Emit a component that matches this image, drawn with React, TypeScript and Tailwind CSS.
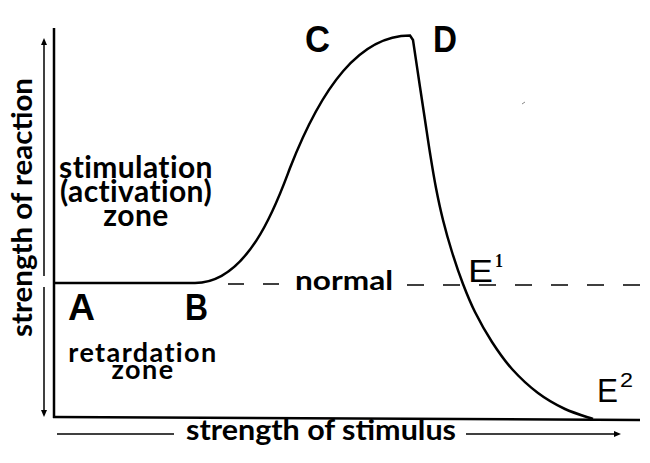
const fall: [number, number][] = [
  [413, 40], [420, 87], [425, 120], [430, 153], [436, 188], [443, 220],
  [452, 252], [463, 284], [475, 312], [492, 342], [512, 369], [538, 393],
  [565, 409], [593, 419],
];

// catmull-rom -> cubic bezier segments
const smooth = (pts: [number, number][]) => {
  let d = "";
  for (let i = 0; i < pts.length - 1; i++) {
    const p0 = pts[i - 1] || pts[i];
    const p1 = pts[i];
    const p2 = pts[i + 1];
    const p3 = pts[i + 2] || p2;
    const c1x = p1[0] + (p2[0] - p0[0]) / 6;
    const c1y = p1[1] + (p2[1] - p0[1]) / 6;
    const c2x = p2[0] - (p3[0] - p1[0]) / 6;
    const c2y = p2[1] - (p3[1] - p1[1]) / 6;
    d += ` C${c1x},${c1y} ${c2x},${c2y} ${p2[0]},${p2[1]}`;
  }
  return d;
};

// flat A-B, S-shaped rise to C, peak, sharp drop at D down to E2
const curve =
  "M54,283 L195,283 C250,283 279,197 290,168 C322,86 360,35.5 410,35.5" +
  " L413,40" +
  smooth(fall);

const gothic = "Lato, 'DejaVu Sans', sans-serif";
const arial = "'Liberation Sans', Arial, sans-serif";

const Label = ({
  x, y, w, size, children, weight = 700, family = gothic,
}: {
  x: number; y: number; w: number; size: number; children: string; weight?: number; family?: string;
}) => (
  <text
    x={x}
    y={y}
    textLength={w}
    lengthAdjust="spacingAndGlyphs"
    fontSize={size}
    fontWeight={weight}
    fontFamily={family}
    fill="#000"
  >
    {children}
  </text>
);

const App = () => {
  return (
    <div className="relative w-[650px] h-[463px] bg-white overflow-hidden">
      <svg width="650" height="463" viewBox="0 0 650 463" className="block">
        {/* axes */}
        <line x1="54" y1="28" x2="54" y2="418" stroke="#000" strokeWidth="2.5" />
        <line x1="53" y1="417" x2="640" y2="420" stroke="#000" strokeWidth="2.5" />

        {/* vertical double arrow */}
        <line x1="44" y1="44" x2="44" y2="276" stroke="#000" strokeWidth="1.5" />
        <polygon points="44,38 41,45 47,45" fill="#000" />
        <line x1="44" y1="287" x2="44" y2="411" stroke="#000" strokeWidth="1.5" />
        <polygon points="44,417 41,410 47,410" fill="#000" />

        {/* horizontal arrow */}
        <line x1="57" y1="434" x2="174" y2="434" stroke="#000" strokeWidth="1.5" />
        <line x1="466" y1="434" x2="615" y2="434" stroke="#000" strokeWidth="1.5" />
        <polygon points="621,434 614,431 614,437" fill="#000" />

        {/* normal line */}
        <line x1="228" y1="284" x2="290" y2="284" stroke="#000" strokeWidth="1.5" strokeDasharray="16 19" />
        <line x1="407" y1="285" x2="640" y2="285" stroke="#000" strokeWidth="1.5" strokeDasharray="17 19" />

        {/* reaction curve */}
        <path d={curve} fill="none" stroke="#000" strokeWidth="2.5" strokeLinejoin="miter" />

        {/* speck */}
        <line x1="522" y1="104" x2="525" y2="102" stroke="#888" strokeWidth="1" />

        {/* rotated y label */}
        <g transform="translate(32,337) rotate(-90)">
          <Label x={0} y={0} w={259} size={28}>strength of reaction</Label>
        </g>

        <Label x={295} y={290} w={98} size={27}>normal</Label>
        <Label x={186} y={440} w={270} size={28}>strength of stimulus</Label>

        <Label x={68} y={320} w={27} size={36} family={arial}>A</Label>
        <Label x={185} y={320} w={23} size={36} family={arial}>B</Label>
        <Label x={305} y={52} w={25} size={36} family={arial}>C</Label>
        <Label x={433} y={52} w={24} size={36} family={arial}>D</Label>

        <Label x={468} y={282} w={25} size={31} weight={400} family={arial}>E</Label>
        <Label x={495} y={267} w={8} size={18} weight={700} family="'Liberation Serif', serif">1</Label>
        <Label x={597} y={402} w={21} size={34} weight={400} family={arial}>E</Label>
        <Label x={620} y={387} w={13} size={20} weight={400} family={arial}>2</Label>
      </svg>

      {/* zone labels */}
      <div className="absolute left-[56px] top-[154px] w-[160px] text-center font-['Lato','DejaVu_Sans',sans-serif] font-bold text-[30px] leading-[24px] tracking-[0.4px] text-black">
        stimulation (activation) zone
      </div>
      <div className="absolute left-[63px] top-[343px] w-[160px] text-center font-['Lato','DejaVu_Sans',sans-serif] font-bold text-[27px] leading-[17px] tracking-[1.4px] text-black">
        retardation zone
      </div>
    </div>
  );
};

export default App;
